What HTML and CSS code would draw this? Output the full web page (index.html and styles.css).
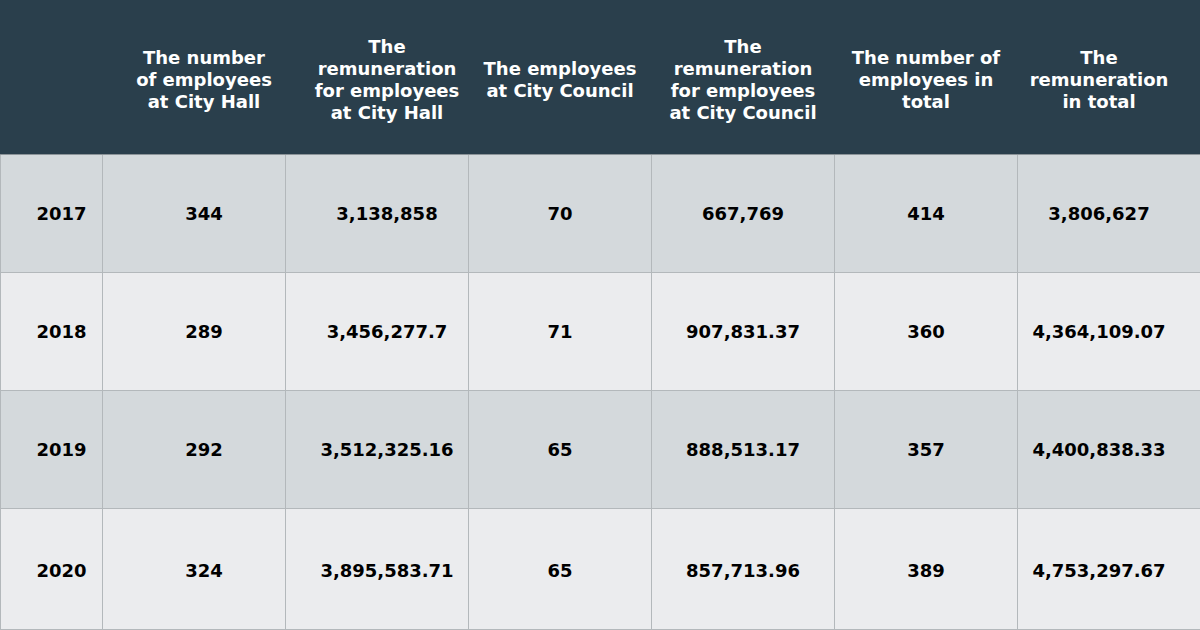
FILE: index.html
```html
<!DOCTYPE html>
<html lang="en">
<head>
<meta charset="utf-8">
<title>Employees and remuneration</title>
<link rel="stylesheet" href="styles.css">
</head>
<body>
<table class="data">
  <colgroup>
    <col class="c-year">
    <col class="c-val"><col class="c-val"><col class="c-val">
    <col class="c-val"><col class="c-val"><col class="c-val">
  </colgroup>
  <thead>
    <tr>
      <th class="sh"></th>
      <th class="sh">The number<br>of employees<br>at City Hall</th>
      <th class="sh">The<br>remuneration<br>for employees<br>at City Hall</th>
      <th>The employees<br>at City Council</th>
      <th>The<br>remuneration<br>for employees<br>at City Council</th>
      <th>The number of<br>employees in<br>total</th>
      <th class="sl">The<br>remuneration<br>in total</th>
    </tr>
  </thead>
  <tbody>
    <tr class="odd">
      <td class="sh">2017</td><td class="sh">344</td><td class="sh">3,138,858</td><td>70</td><td>667,769</td><td>414</td><td class="sl">3,806,627</td>
    </tr>
    <tr class="even">
      <td class="sh">2018</td><td class="sh">289</td><td class="sh">3,456,277.7</td><td>71</td><td>907,831.37</td><td>360</td><td class="sl">4,364,109.07</td>
    </tr>
    <tr class="odd">
      <td class="sh">2019</td><td class="sh">292</td><td class="sh">3,512,325.16</td><td>65</td><td>888,513.17</td><td>357</td><td class="sl">4,400,838.33</td>
    </tr>
    <tr class="even last">
      <td class="sh">2020</td><td class="sh">324</td><td class="sh">3,895,583.71</td><td>65</td><td>857,713.96</td><td>389</td><td class="sl">4,753,297.67</td>
    </tr>
  </tbody>
</table>
</body>
</html>
```
FILE: styles.css
```css
html, body {
  margin: 0;
  padding: 0;
  background: #ebecee;
}
body {
  width: 1200px;
  height: 630px;
  overflow: hidden;
  font-family: "DejaVu Sans", Verdana, sans-serif;
}
.data {
  width: 1200px;
  border-collapse: collapse;
  table-layout: fixed;
}
.c-year { width: 102px; }
.c-val { width: 183px; }
.data th {
  height: 154px;
  box-sizing: border-box;
  background: #2a3f4c;
  color: #ffffff;
  font-size: 18px;
  font-weight: bold;
  line-height: 22px;
  text-align: center;
  vertical-align: middle;
  padding: 4px 0 0 0;
  white-space: nowrap;
  border: 1px solid #2a3f4c;
  border-bottom: 1px solid #8c9499;
}
.data td {
  height: 118px;
  box-sizing: border-box;
  color: #000000;
  font-size: 18px;
  font-weight: bold;
  text-align: center;
  vertical-align: middle;
  padding: 0;
  white-space: nowrap;
  border: 1px solid #b3b8bb;
}
.data .last td { height: 121px; padding-top: 2px; }
.data th.sh, .data td.sh { padding-left: 20px; }
.data th.sl, .data td.sl { padding-right: 20px; }
.odd td { background: #d4d9dc; }
.even td { background: #ebecee; }
```
